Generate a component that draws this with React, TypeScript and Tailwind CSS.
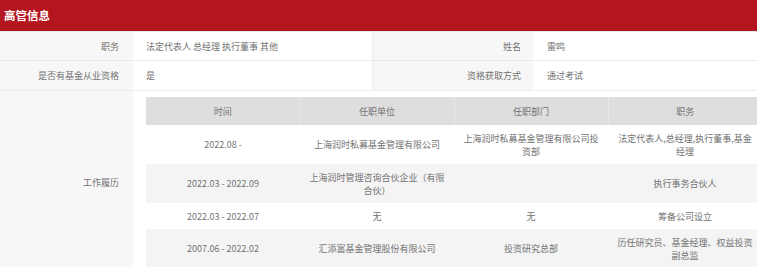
import React from 'react';

const rows = [
  { time: '2022.08 -', org: '上海润时私募基金管理有限公司', dept: '上海润时私募基金管理有限公司投资部', role: '法定代表人,总经理,执行董事,基金经理', bg: 'bg-white' },
  { time: '2022.03 - 2022.09', org: '上海润时管理咨询合伙企业（有限合伙）', dept: '', role: '执行事务合伙人', bg: 'bg-[#f4f4f4]' },
  { time: '2022.03 - 2022.07', org: '无', dept: '无', role: '筹备公司设立', bg: 'bg-white' },
  { time: '2007.06 - 2022.02', org: '汇添富基金管理股份有限公司', dept: '投资研究总部', role: '历任研究员、基金经理、权益投资副总监', bg: 'bg-[#f4f4f4]' },
];

const App: React.FC = () => {
  return (
    <div className="w-[757px] h-[267px] overflow-hidden bg-white" style={{ fontFamily: '"Noto Sans CJK SC", "Noto Sans", sans-serif' }}>
      <div className="w-[775px]">
        <div className="h-[31px] bg-[#b3161f] flex items-center pl-[4px] text-white text-[11.5px] font-bold">
          高管信息
        </div>
        <div className="h-px bg-[#e9e9e9]" />
        <div className="grid grid-cols-[133px_240px_160px_1fr] text-[9px] leading-[13px] text-[#727272]">
          <div className="h-[29px] bg-[#f7f7f7] flex items-center justify-end pr-[14px] border-b border-[#ececec]">职务</div>
          <div className="h-[29px] flex items-center pl-[13px] border-b border-r border-[#ececec]">法定代表人 总经理 执行董事 其他</div>
          <div className="h-[29px] bg-[#f7f7f7] flex items-center justify-end pr-[12px] border-b border-[#ececec]">姓名</div>
          <div className="h-[29px] flex items-center pl-[14px] border-b border-[#ececec]">雷鸣</div>

          <div className="h-[30px] bg-[#f7f7f7] flex items-center justify-end pr-[14px] border-b border-[#ececec]">是否有基金从业资格</div>
          <div className="h-[30px] flex items-center pl-[13px] border-b border-r border-[#ececec]">是</div>
          <div className="h-[30px] bg-[#f7f7f7] flex items-center justify-end pr-[12px] border-b border-[#ececec]">资格获取方式</div>
          <div className="h-[30px] flex items-center pl-[14px] border-b border-[#ececec]">通过考试</div>

          <div className="bg-[#f7f7f7] flex items-center justify-end pr-[14px]">工作履历</div>
          <div className="col-span-3 pt-[6px] pb-[6px] pl-[13px] pr-[13px]">
            <table className="w-[616px] table-fixed border-collapse text-center">
              <colgroup>
                <col className="w-[154px]" />
                <col className="w-[154px]" />
                <col className="w-[154px]" />
                <col className="w-[154px]" />
              </colgroup>
              <thead>
                <tr className="bg-[#dedede] h-[28px]">
                  {['时间', '任职单位', '任职部门', '职务'].map((h, i) => (
                    <th key={h} className={`font-normal px-[8px] ${i < 3 ? 'border-r border-[#e8e8e8]' : ''}`}>{h}</th>
                  ))}
                </tr>
              </thead>
              <tbody>
                {rows.map((r, i) => (
                  <tr key={i} className={`${r.bg} ${i === 2 ? 'h-[26px]' : 'h-[39px]'}`}>
                    <td className="px-[8px]">{r.time}</td>
                    <td className="px-[8px]">{r.org}</td>
                    <td className="px-[8px]">{r.dept}</td>
                    <td className="px-[8px]">{r.role}</td>
                  </tr>
                ))}
              </tbody>
            </table>
          </div>
        </div>
      </div>
    </div>
  );
};

export default App;
